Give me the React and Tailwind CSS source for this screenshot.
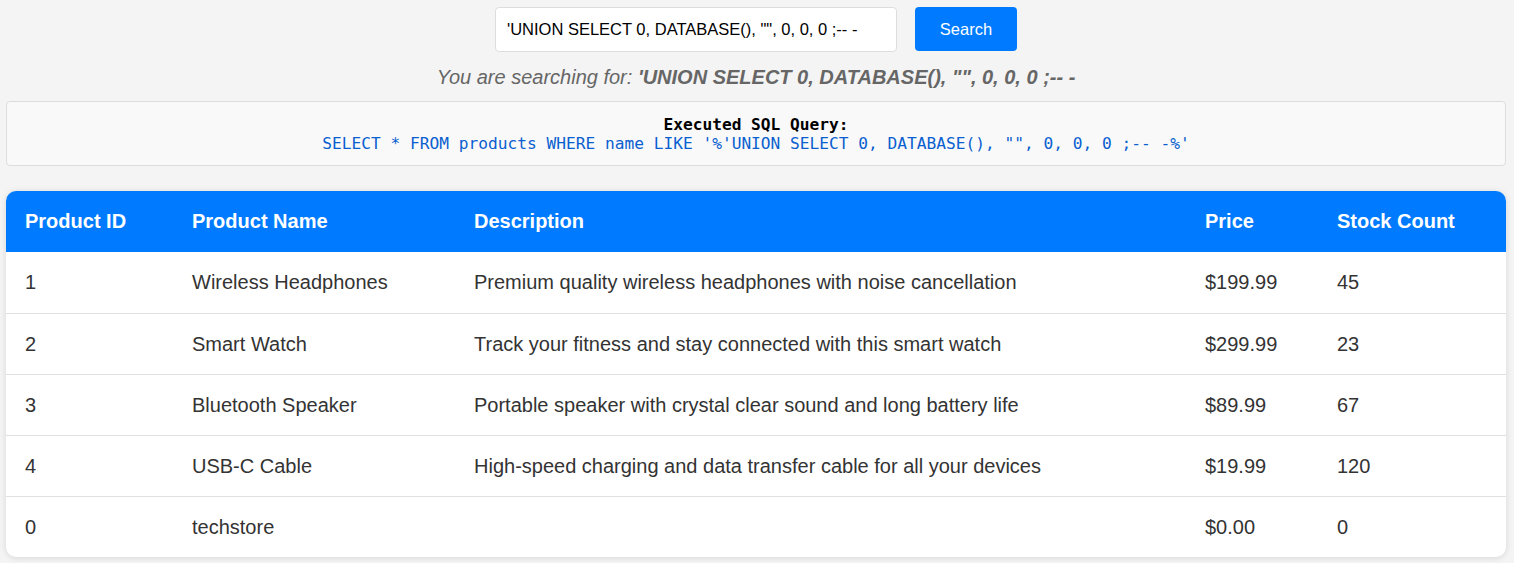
import React from "react";

const rows = [
  ["1", "Wireless Headphones", "Premium quality wireless headphones with noise cancellation", "$199.99", "45"],
  ["2", "Smart Watch", "Track your fitness and stay connected with this smart watch", "$299.99", "23"],
  ["3", "Bluetooth Speaker", "Portable speaker with crystal clear sound and long battery life", "$89.99", "67"],
  ["4", "USB-C Cable", "High-speed charging and data transfer cable for all your devices", "$19.99", "120"],
  ["0", "techstore", "", "$0.00", "0"],
];

const q = `'UNION SELECT 0, DATABASE(), "", 0, 0, 0 ;-- -`;

export default function App() {
  return (
    <div
      className="min-h-[563px] bg-[#f4f4f4] pl-[6px] pr-[8px] pt-[7px] text-[#333]"
      style={{ fontFamily: '"Liberation Sans", Arial, sans-serif' }}
    >
      <div className="flex justify-center gap-[18px]">
        <div className="flex h-[45px] w-[402px] items-center rounded-[4px] border border-[#ddd] bg-white px-[11px] text-[16.5px] text-black">
          {q}
        </div>
        <button className="h-[44px] w-[102px] rounded-[4px] bg-[#007bff] text-[16.5px] text-white">
          Search
        </button>
      </div>
      <p className="mt-[10px] text-center text-[20px] italic text-[#666]">
        You are searching for: <strong>{q}</strong>
      </p>
      <div
        className="mt-[9px] rounded-[4px] border border-[#ddd] bg-[#f9f9f9] px-[12px] pt-[13px] pb-[12px] text-center text-[16.2px] leading-[19px]"
        style={{ fontFamily: '"DejaVu Sans Mono", monospace' }}
      >
        <div className="font-bold text-black">Executed SQL Query:</div>
        <div className="text-[#0a5fd0]">
          {`SELECT * FROM products WHERE name LIKE '%${q}%'`}
        </div>
      </div>
      <div className="mt-[25px] overflow-hidden rounded-[10px] bg-white shadow-[0_1px_6px_rgba(0,0,0,0.12)]">
        <table className="w-full border-collapse text-left text-[20px]">
          <thead>
            <tr className="h-[61px] bg-[#007bff] text-white">
              <th className="w-[167px] pl-[19px] pb-[2px] font-bold">Product ID</th>
              <th className="w-[282px] pl-[19px] pb-[2px] font-bold">Product Name</th>
              <th className="w-[731px] pl-[19px] pb-[2px] font-bold">Description</th>
              <th className="w-[132px] pl-[19px] pb-[2px] font-bold">Price</th>
              <th className="pl-[19px] pb-[2px] font-bold">Stock Count</th>
            </tr>
          </thead>
          <tbody>
            {rows.map((r, i) => (
              <tr key={i} className={`h-[61px] ${i < rows.length - 1 ? "border-b border-[#e0e0e0]" : ""}`}>
                {r.map((c, j) => (
                  <td key={j} className="pl-[19px]">{c}</td>
                ))}
              </tr>
            ))}
          </tbody>
        </table>
      </div>
    </div>
  );
}
